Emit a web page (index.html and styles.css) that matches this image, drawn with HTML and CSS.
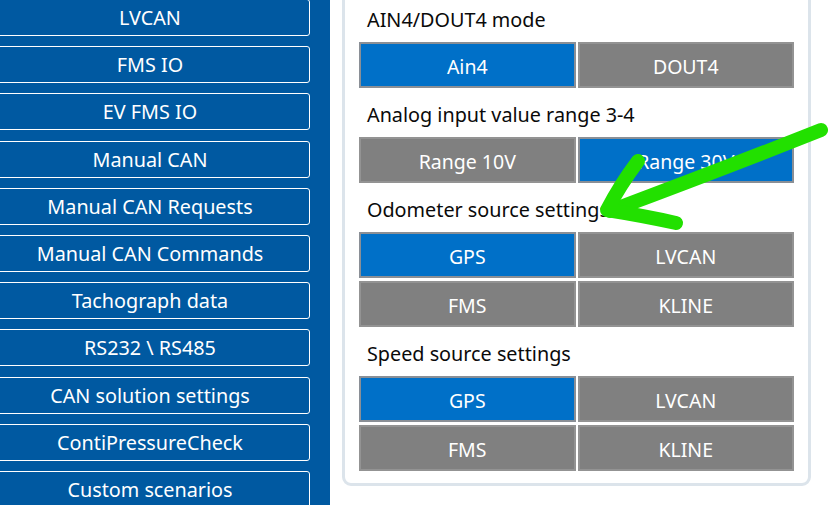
FILE: index.html
```html
<!DOCTYPE html>
<html lang="en">
<head>
  <meta charset="UTF-8" />
  <meta name="viewport" content="width=device-width, initial-scale=1.0"/>
  <title>CAN settings</title>
  <link rel="stylesheet" href="styles.css">
</head>
<body>
  <nav class="sidebar">
    <div class="nav-btn">LVCAN</div>
    <div class="nav-btn">FMS IO</div>
    <div class="nav-btn">EV FMS IO</div>
    <div class="nav-btn">Manual CAN</div>
    <div class="nav-btn">Manual CAN Requests</div>
    <div class="nav-btn">Manual CAN Commands</div>
    <div class="nav-btn">Tachograph data</div>
    <div class="nav-btn">RS232 \ RS485</div>
    <div class="nav-btn">CAN solution settings</div>
    <div class="nav-btn">ContiPressureCheck</div>
    <div class="nav-btn">Custom scenarios</div>
  </nav>

  <main class="content">
    <div class="card">
      <div class="label">AIN4/DOUT4 mode</div>
      <div class="options">
        <div class="opt active">Ain4</div>
        <div class="opt">DOUT4</div>
      </div>

      <div class="label">Analog input value range 3-4</div>
      <div class="options">
        <div class="opt">Range 10V</div>
        <div class="opt active">Range 30V</div>
      </div>

      <div class="label">Odometer source settings</div>
      <div class="options">
        <div class="opt active">GPS</div>
        <div class="opt">LVCAN</div>
        <div class="opt">FMS</div>
        <div class="opt">KLINE</div>
      </div>

      <div class="label">Speed source settings</div>
      <div class="options">
        <div class="opt active">GPS</div>
        <div class="opt">LVCAN</div>
        <div class="opt">FMS</div>
        <div class="opt">KLINE</div>
      </div>
    </div>
  </main>

  <!-- hand drawn annotation on top of the screenshot -->
  <svg class="arrow" width="831" height="505" viewBox="0 0 831 505">
    <path d="M821 130 Q720 170 610 211" />
    <path d="M638 161 Q620 185 607 210 Q645 216 676 223" />
  </svg>
</body>
</html>
```

FILE: styles.css
```css
body { margin: 0; display: flex; height: 505px; overflow: hidden; background: #fff; font-family: "Noto Sans", sans-serif; }

.sidebar { width: 330px; flex: none; background: #0059a1; overflow: hidden; }
.nav-btn { box-sizing: border-box; width: 320px; height: 37px; margin: -1px 0 10.2px -10px; border: 1px solid #fff; border-radius: 3px; color: #fff; font-size: 19.8px; display: flex; align-items: center; justify-content: center; }
.nav-btn + .nav-btn { margin-top: 0; }

.content { flex: 1; padding-left: 12px; }
.card { margin-top: -10px; border: 3px solid #dce4eb; border-radius: 9px; padding: 0 14px 12px; width: 435px; }
.label { padding: 15px 0 10px 8px; line-height: 24px; font-size: 19.8px; color: #0a0a0a; }
.options { display: grid; grid-template-columns: 1fr 1fr; gap: 3px 2px; }
.opt { box-sizing: border-box; height: 46px; border: 2px solid #939393; background: #808080; color: #fff; font-size: 19.5px; display: flex; align-items: center; justify-content: center; padding-top: 2px; }
.opt.active { background: #0070c8; border-color: #8a8f96; }

.arrow { position: absolute; left: 0; top: 0; pointer-events: none; }
.arrow path { fill: none; stroke: #22e000; stroke-width: 14; stroke-linecap: round; stroke-linejoin: round; }
```
